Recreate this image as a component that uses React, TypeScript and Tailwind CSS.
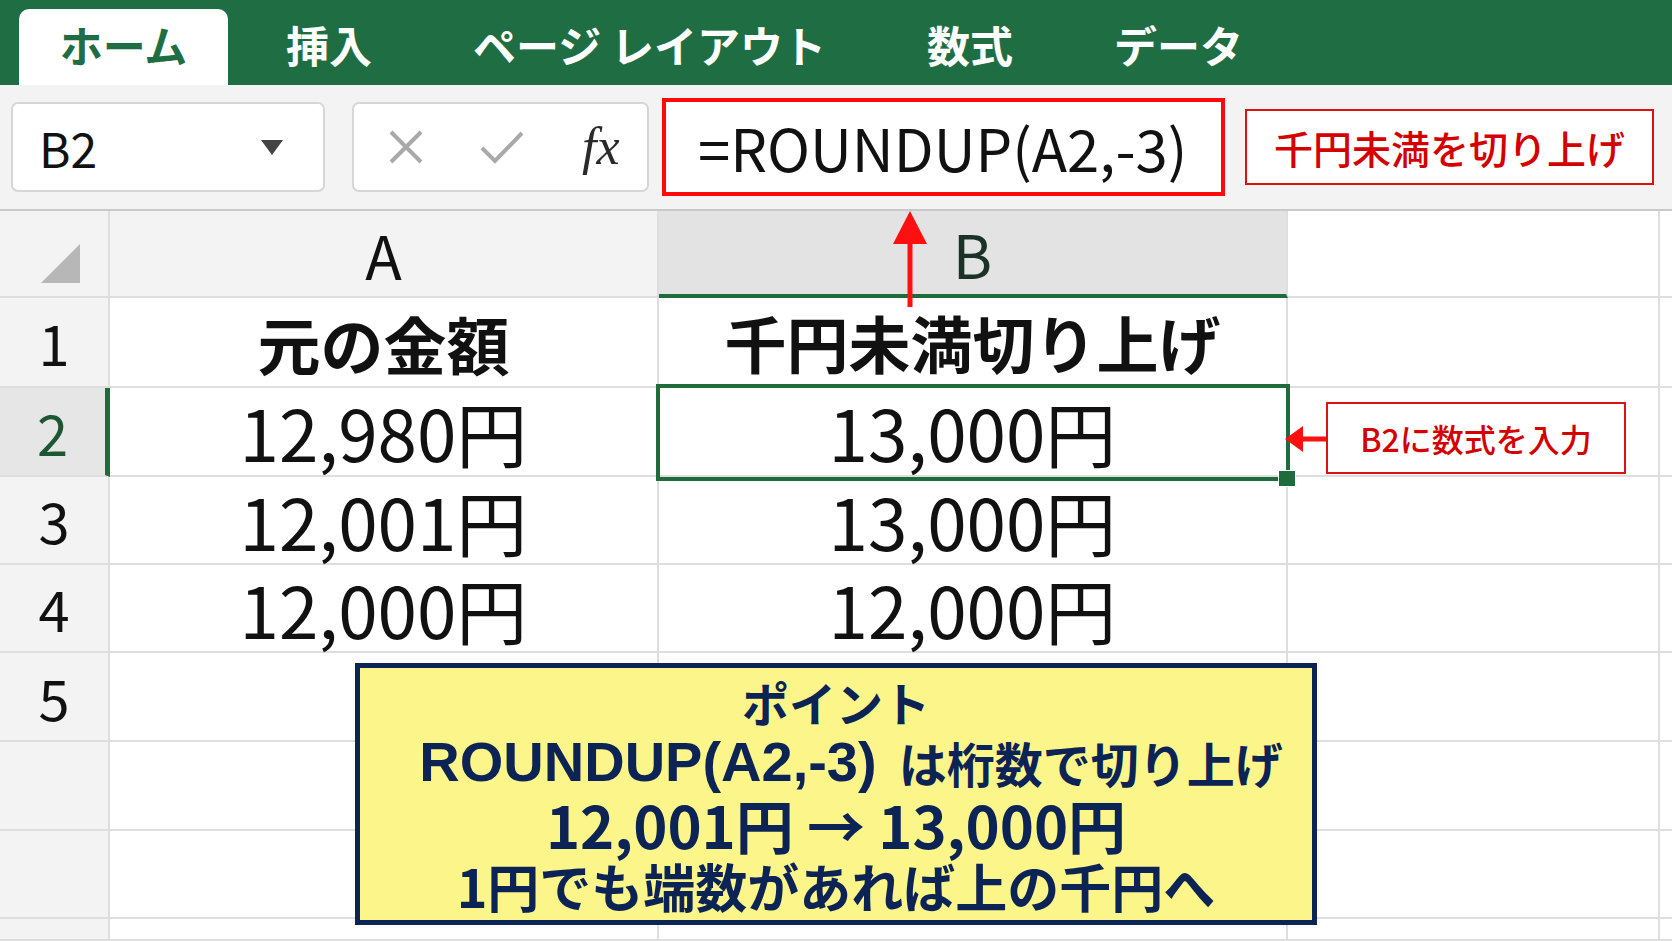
import React from 'react';

const rows = [
  { n: '1', a: '元の金額', b: '千円未満切り上げ', head: true },
  { n: '2', a: '12,980円', b: '13,000円' },
  { n: '3', a: '12,001円', b: '13,000円' },
  { n: '4', a: '12,000円', b: '12,000円' },
  { n: '5', a: '', b: '' },
  { n: '', a: '', b: '' },
  { n: '', a: '', b: '' },
  { n: '', a: '', b: '' },
];

const line = 'border-r-2 border-b-2 border-[#dedede]';

function Ribbon() {
  return (
    <div className="h-[85px] bg-[#1f6e43] flex items-end shrink-0 text-[43px] font-bold leading-none">
      <div className="ml-[19px] w-[209px] h-[76px] bg-white rounded-t-[10px] flex items-center justify-center text-[#1f6e43] pb-[6px]">
        ホーム
      </div>
      <div className="flex items-center h-[76px] text-white gap-[101px] ml-[58px] pb-[6px]">
        <span>挿入</span>
        <span>ページ レイアウト</span>
        <span>数式</span>
        <span>データ</span>
      </div>
    </div>
  );
}

function FormulaBar() {
  return (
    <div className="h-[126px] bg-[#f3f3f3] flex items-center shrink-0 pl-[11px] border-b-2 border-[#c9c9c9]">
      <div className="w-[314px] h-[90px] bg-white border-2 border-[#d6d6d6] rounded-[7px] flex items-center justify-between pl-[26px] pr-[40px]">
        <span className="text-[48px] text-[#111] leading-none">B2</span>
        <svg width="22" height="15" viewBox="0 0 22 15">
          <path d="M0 0 L22 0 L11 15 Z" fill="#444" />
        </svg>
      </div>
      <div className="ml-[27px] w-[297px] h-[90px] bg-white border-2 border-[#d6d6d6] rounded-[7px] flex items-center pl-[35px]">
        <svg width="34" height="34" viewBox="0 0 34 34">
          <path d="M2 2 L32 32 M32 2 L2 32" stroke="#a9a9a9" strokeWidth="4" fill="none" />
        </svg>
        <svg width="44" height="34" viewBox="0 0 44 34" className="ml-[57px]">
          <path d="M2 18 L15 31 L42 3" stroke="#a9a9a9" strokeWidth="4" fill="none" />
        </svg>
        <span className="ml-[58px] font-['Liberation_Serif',serif] italic text-[52px] text-[#2a2a2a] leading-none">fx</span>
      </div>
      <div className="ml-[13px] w-[563px] h-[98px] bg-white border-[4px] border-[#ff0a0a] flex items-center pl-[32px]">
        <span className="text-[58px] text-[#111] leading-none">=ROUNDUP(A2,-3)</span>
      </div>
      <div className="ml-[20px] w-[409px] h-[76px] bg-white border-2 border-[#e01010] flex items-center justify-center">
        <span className="text-[39px] font-medium text-[#d40000] leading-none">千円未満を切り上げ</span>
      </div>
    </div>
  );
}

function Sheet() {
  return (
    <div className="relative flex-1">
      <div className="grid h-full grid-cols-[110px_549px_629px_372px_1fr] grid-rows-[87px_90px_89px_88px_88px_89px_89px_88px_1fr] leading-none">
        {/* header row */}
        <div className={`${line} bg-[#f3f3f3] relative`}>
          <svg width="39" height="39" viewBox="0 0 39 39" className="absolute left-[41px] top-[33px]">
            <path d="M39 0 L39 39 L0 39 Z" fill="#b7b7b7" />
          </svg>
        </div>
        <div className={`${line} bg-[#f3f3f3] flex items-center justify-center text-[60px] text-[#111]`}>A</div>
        <div className="border-r-2 border-b-[4px] border-r-[#dedede] border-b-[#1e6b3c] bg-[#e3e3e3] flex items-center justify-center text-[60px] text-[#1b3326]">
          B
        </div>
        <div className={`${line} bg-white`} />
        <div className="border-b-2 border-[#dedede] bg-white" />

        {rows.map((r, i) => (
          <React.Fragment key={i}>
            <div
              className={
                r.n === '2'
                  ? 'border-r-[5px] border-b-2 border-r-[#1e6b3c] border-b-[#dedede] bg-[#e6e6e6] flex items-center justify-center text-[56px] text-[#1e5634]'
                  : `${line} bg-[#f3f3f3] flex items-center justify-center text-[56px] text-[#111]`
              }
            >
              {r.n}
            </div>
            <div
              className={`${line} bg-white flex items-center justify-center text-[#111] ${
                r.head ? 'text-[63px] font-bold' : 'text-[71px]'
              }`}
            >
              {r.a}
            </div>
            <div
              className={`${line} bg-white flex items-center justify-center text-[#111] ${
                r.head ? 'text-[62px] font-bold' : 'text-[71px]'
              }`}
            >
              {r.b}
            </div>
            <div className={`${line} bg-white`} />
            <div className="border-b-2 border-[#dedede] bg-white" />
          </React.Fragment>
        ))}
        {[0, 1, 2, 3].map((k) => (
          <div key={k} className={`${k === 0 ? 'bg-[#f3f3f3]' : 'bg-white'} border-r-2 border-[#dedede]`} />
        ))}
        <div className="bg-white" />
      </div>

      {/* selection on B2 */}
      <div className="absolute left-[656px] top-[173px] w-[634px] h-[97px] border-[4px] border-[#1e6b3c]" />
      <div className="absolute left-[1278px] top-[259px] w-[18px] h-[17px] bg-[#1e6b3c] border border-white" />

      {/* arrow up to formula */}
      <svg width="40" height="98" viewBox="0 0 40 98" className="absolute left-[890px] top-[0px]">
        <path d="M20 0 L37 33 L3 33 Z" fill="#ff1010" />
        <rect x="17.5" y="30" width="5" height="66" fill="#ff1010" />
      </svg>

      {/* arrow left to B2 */}
      <svg width="42" height="28" viewBox="0 0 42 28" className="absolute left-[1285px] top-[214px]">
        <path d="M0 14 L18 1 L18 27 Z" fill="#ff1010" />
        <rect x="16" y="11.5" width="26" height="5" fill="#ff1010" />
      </svg>
      <div className="absolute left-[1326px] top-[191px] w-[300px] h-[72px] bg-white border-2 border-[#e01010] flex items-center justify-center">
        <span className="text-[32px] font-medium text-[#d40000] leading-none">B2に数式を入力</span>
      </div>

      {/* point box */}
      <div className="absolute left-[355px] top-[452px] w-[962px] h-[262px] bg-[#fcf68a] border-[5px] border-[#0c2356] flex flex-col items-center justify-center font-bold text-[#0c2356] leading-none">
        <div className="text-[47px] h-[60px] flex items-center">ポイント</div>
        <div className="h-[62px] flex items-center pl-[30px]">
          <span className="font-['Liberation_Sans',sans-serif] text-[56px]">ROUNDUP(A2,-3)</span>
          <span className="ml-[22px] text-[48px]">は桁数で切り上げ</span>
        </div>
        <div className="text-[58px] h-[62px] flex items-center">12,001円 → 13,000円</div>
        <div className="text-[52px] h-[62px] flex items-center">1円でも端数があれば上の千円へ</div>
      </div>
    </div>
  );
}

export default function App() {
  return (
    <div className="w-[1672px] h-[941px] overflow-hidden flex flex-col bg-white font-['Noto_Sans_CJK_JP',sans-serif]">
      <Ribbon />
      <FormulaBar />
      <Sheet />
    </div>
  );
}
